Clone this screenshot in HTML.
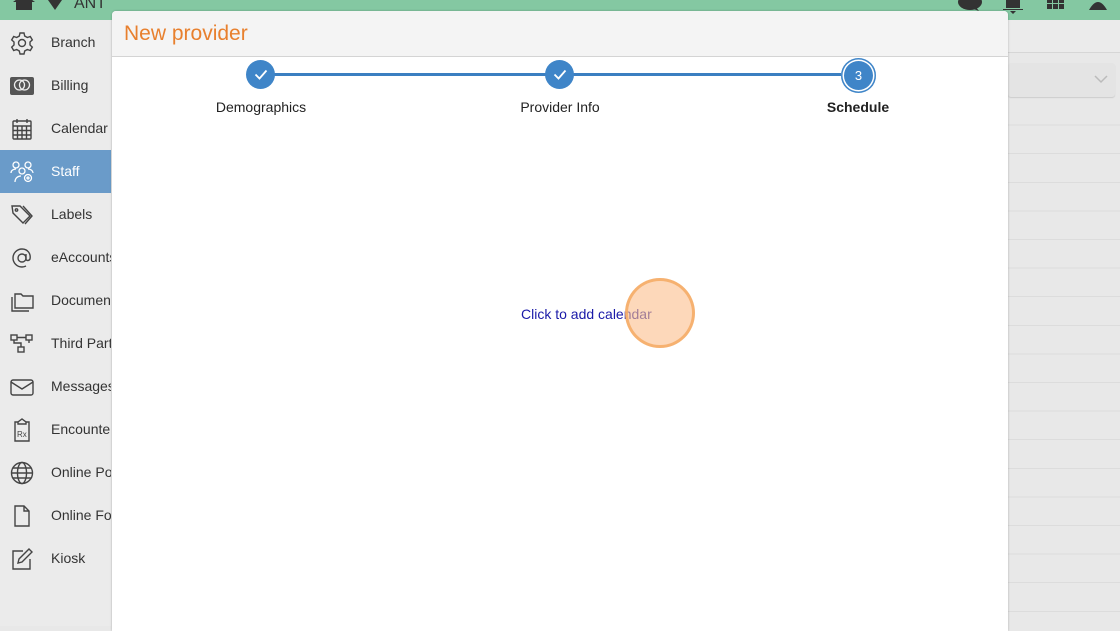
<!DOCTYPE html>
<html><head><style>
*{margin:0;padding:0;box-sizing:border-box}
body{width:1120px;height:626px;overflow:hidden;background:#e8e8e8;font-family:"Liberation Sans",sans-serif;position:relative}
.top{position:absolute;left:0;top:0;width:1120px;height:20px;background:#84c8a2}
.side{position:absolute;left:0;top:20px;width:111px;height:606px;background:#ebebeb}
.item{position:absolute;left:0;width:111px;height:43px;display:flex;align-items:center;font-size:14px;color:#333;white-space:nowrap;overflow:hidden}
.item svg{position:absolute;left:10px;width:24px;height:24px}
.item span{position:absolute;left:51px;top:13px}
.item.act{background:#6a9bc9;color:#fff}
.rows{position:absolute;left:1008px;top:97px;width:112px;height:529px;background:repeating-linear-gradient(to bottom,#e8e8e8 0,#e8e8e8 27.6px,#dcdcdc 27.6px,#dcdcdc 28.6px)}
.rhead{position:absolute;left:1008px;top:20px;width:112px;height:33px;background:#ebebeb;border-bottom:1px solid #d6d6d6}
.sel{position:absolute;left:1008px;top:63px;width:107px;height:34px;background:#e4e4e4;border-radius:3px;box-shadow:0 1px 1px #ccc}
.modal{position:absolute;left:112px;top:11px;width:896px;height:620px;background:#fff;border-radius:4px 4px 0 0;box-shadow:0 0 2px rgba(0,0,0,.25)}
.mh{height:46px;background:#f4f4f4;border-bottom:1px solid #d4d4d4;border-radius:4px 4px 0 0}
.mh h1{position:absolute;left:12px;top:11px;font-size:21px;font-weight:normal;color:#e8802e}
.line{position:absolute;top:62px;left:149px;width:598px;height:3px;background:#3b7fc1}
.dot{position:absolute;top:49px;width:29px;height:29px;border-radius:50%;background:#3f85c8;color:#fff;display:flex;align-items:center;justify-content:center;font-size:13px}
.lab{position:absolute;top:88px;font-size:14px;color:#222;transform:translateX(-50%);white-space:nowrap}
.cta{position:absolute;left:409px;top:295px;font-size:14px;color:#1a1aa8}
.circ{position:absolute;left:625px;top:278px;width:70px;height:70px;border-radius:50%;background:rgba(252,190,140,.6);border:3px solid rgba(245,170,100,.85)}
</style></head><body>
<div class="top">
<svg style="position:absolute;left:13px;top:0" width="22" height="10"><path d="M0 2 L11 -6 L22 2 H19 V10 H3 V2Z" fill="#333"/></svg>
<svg style="position:absolute;left:48px;top:0" width="14" height="10"><path d="M0 0 H14 L7 10Z" fill="#333"/></svg>
<div style="position:absolute;left:74px;top:-5px;font-size:16px;color:#333">ANT</div>
<svg style="position:absolute;left:957px;top:0" width="26" height="12"><ellipse cx="13" cy="2" rx="12" ry="8" fill="#333"/><path d="M18 6l4 5-8-3z" fill="#333"/></svg>
<svg style="position:absolute;left:1003px;top:0" width="20" height="14"><path d="M3 0 H17 V8 H3Z M0 9 H20 V10 H0Z M7 11 H13 L10 14Z" fill="#333"/></svg>
<svg style="position:absolute;left:1047px;top:0" width="17" height="10"><path d="M0 0H5V3H0ZM6 0H11V3H6ZM12 0H17V3H12ZM0 4H5V9H0ZM6 4H11V9H6ZM12 4H17V9H12Z" fill="#333"/></svg>
<svg style="position:absolute;left:1089px;top:0" width="18" height="10"><path d="M0 10 Q9 -6 18 10Z" fill="#333"/></svg>
</div>
<div class="side">
<div class="item" style="top:1px"><svg viewBox="0 0 24 24" fill="none" stroke="#444" stroke-width="1.4"><circle cx="12" cy="12" r="3.5"/><path d="M10 2h4l.7 3 2.6 1.5 3-1 2 3.4-2.3 2.1v3l2.3 2.1-2 3.4-3-1-2.6 1.5-.7 3h-4l-.7-3-2.6-1.5-3 1-2-3.4 2.3-2.1v-3L1.7 8.9l2-3.4 3 1L9.3 5z"/></svg><span>Branch</span></div>
<div class="item" style="top:44px"><svg viewBox="0 0 24 24"><rect x="0" y="3" width="24" height="18" rx="2" fill="#555"/><circle cx="9.5" cy="11" r="5" fill="none" stroke="#eee" stroke-width="1.3"/><circle cx="14.5" cy="11" r="5" fill="none" stroke="#eee" stroke-width="1.3"/></svg><span>Billing</span></div>
<div class="item" style="top:87px"><svg viewBox="0 0 24 24" fill="none" stroke="#444" stroke-width="1.4"><rect x="3" y="4" width="18" height="18" rx="1"/><path d="M3 9h18M3 13.5h18M3 18h18M7.5 9v13M12 9v13M16.5 9v13M7 2v4M17 2v4"/></svg><span>Calendar</span></div>
<div class="item act" style="top:130px"><svg viewBox="0 0 24 24" fill="none" stroke="#fff" stroke-width="1.3"><circle cx="6" cy="5" r="3"/><circle cx="18" cy="5" r="3"/><circle cx="12" cy="11" r="3"/><path d="M1 13c0-3 3-4 5-4M23 13c0-2-2-4-5-4M5 22c0-4 3-6 6-6"/><circle cx="18" cy="18" r="3.5"/><circle cx="18" cy="18" r="1"/></svg><span>Staff</span></div>
<div class="item" style="top:173px"><svg viewBox="0 0 24 24" fill="none" stroke="#444" stroke-width="1.4"><path d="M2 3h8l10 10-7 7L3 10z"/><path d="M13 3l9 10-7 8"/><circle cx="6.5" cy="7" r="1.2"/></svg><span>Labels</span></div>
<div class="item" style="top:216px"><svg viewBox="0 0 24 24" fill="none" stroke="#444" stroke-width="1.4"><circle cx="12" cy="12" r="4"/><path d="M16 8v5c0 2 3 2 4 0 1-5-2-10-8-10a9 9 0 100 18c2 0 3-.5 4-1"/></svg><span>eAccounts</span></div>
<div class="item" style="top:259px"><svg viewBox="0 0 24 24" fill="none" stroke="#444" stroke-width="1.4"><path d="M5 5h6l2 2h10v12H5z"/><path d="M2 8v14h17"/></svg><span>Documents</span></div>
<div class="item" style="top:302px"><svg viewBox="0 0 24 24" fill="none" stroke="#444" stroke-width="1.4"><rect x="1" y="3" width="6" height="5"/><rect x="16" y="3" width="6" height="5"/><rect x="8" y="15" width="6" height="5"/><path d="M7 5.5h9M4 8v3h7v4M19 8v3"/></svg><span>Third Party</span></div>
<div class="item" style="top:345px"><svg viewBox="0 0 24 24" fill="none" stroke="#444" stroke-width="1.4"><rect x="1" y="5" width="22" height="15" rx="2"/><path d="M1 7l11 7 11-7"/></svg><span>Messages</span></div>
<div class="item" style="top:388px"><svg viewBox="0 0 24 24" fill="none" stroke="#444" stroke-width="1.4"><path d="M8 4H5v19h14V4h-3"/><path d="M8 6h8V4l-4-3-4 3z"/><text x="7" y="19" font-size="8" fill="#444" stroke="none">Rx</text></svg><span>Encounters</span></div>
<div class="item" style="top:431px"><svg viewBox="0 0 24 24" fill="none" stroke="#444" stroke-width="1.4"><circle cx="12" cy="12" r="10.5"/><ellipse cx="12" cy="12" rx="4.5" ry="10.5"/><path d="M1.5 12h21M3 7h18M3 17h18"/></svg><span>Online Portal</span></div>
<div class="item" style="top:474px"><svg viewBox="0 0 24 24" fill="none" stroke="#444" stroke-width="1.4"><path d="M5 2h9l5 5v15H5z"/><path d="M14 2v5h5"/></svg><span>Online Forms</span></div>
<div class="item" style="top:517px"><svg viewBox="0 0 24 24" fill="none" stroke="#444" stroke-width="1.4"><path d="M13 4H3v18h17V12"/><path d="M19 2l3 3-10 10-4 1 1-4z"/></svg><span>Kiosk</span></div>
</div>
<div class="rhead"></div>
<div class="rows"></div>
<div class="sel"><svg style="position:absolute;left:86px;top:12px" width="14" height="9"><path d="M1 1l6 6 6-6" fill="none" stroke="#bbb" stroke-width="1.5"/></svg></div>
<div class="modal">
<div class="mh"><h1>New provider</h1></div>
<div class="line"></div>
<div class="dot" style="left:134px"><svg width="14" height="11"><path d="M1.5 5.5l4 4 7-8" fill="none" stroke="#fff" stroke-width="1.8"/></svg></div>
<div class="dot" style="left:433px"><svg width="14" height="11"><path d="M1.5 5.5l4 4 7-8" fill="none" stroke="#fff" stroke-width="1.8"/></svg></div>
<div class="dot" style="left:729px;top:47px;width:35px;height:35px;box-shadow:inset 0 0 0 1.5px #3f85c8,inset 0 0 0 3px #fff">3</div>
<div class="lab" style="left:149px">Demographics</div>
<div class="lab" style="left:448px">Provider Info</div>
<div class="lab" style="left:746px;font-weight:bold">Schedule</div>
<div class="cta">Click to add calendar</div>
</div>
<div class="circ"></div>
</body></html>
